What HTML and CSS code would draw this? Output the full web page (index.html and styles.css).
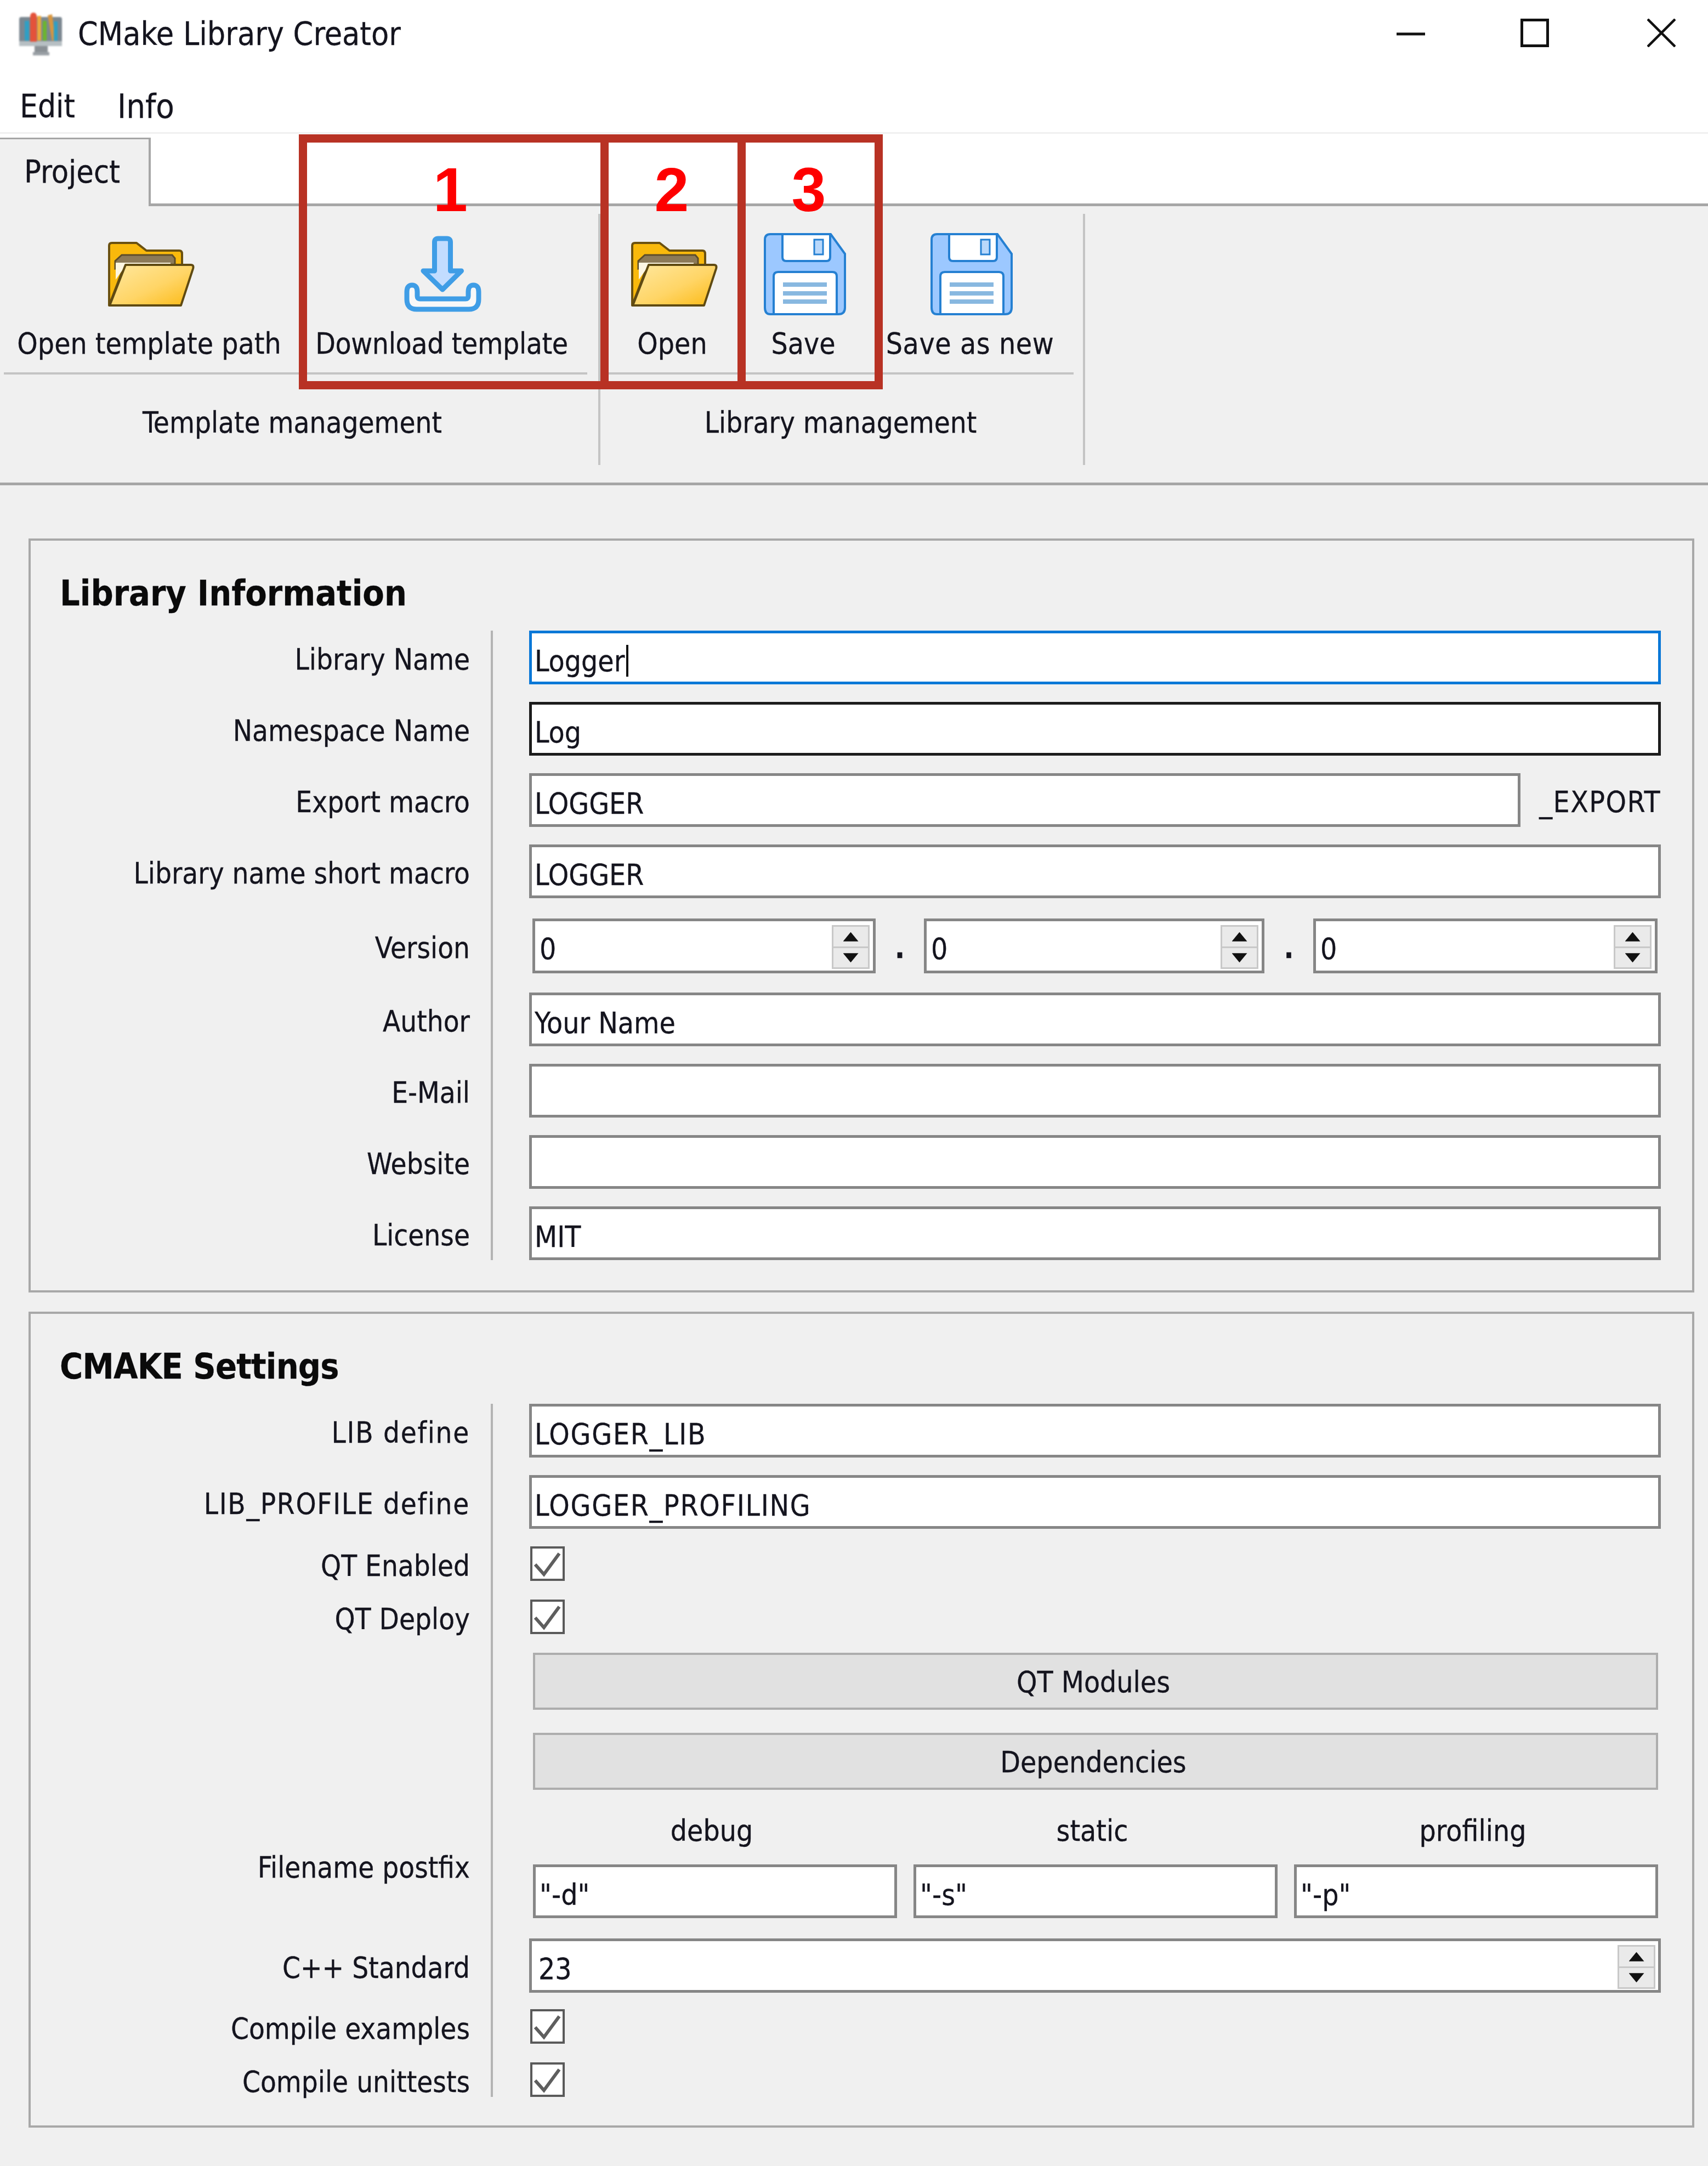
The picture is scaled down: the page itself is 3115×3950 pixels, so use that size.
FILE: index.html
```html
<!DOCTYPE html>
<html lang="en">
<head>
  <meta charset="UTF-8">
  <title>CMake Library Creator</title>
  <link rel="stylesheet" href="styles.css">
</head>
<body>
<svg class="defs" width="0" height="0">
  <defs>
    <linearGradient id="folderFront" x1="0" y1="0" x2="1" y2="1">
      <stop offset="0" stop-color="#ffe8a0"/>
      <stop offset="0.55" stop-color="#ffd566"/>
      <stop offset="1" stop-color="#fbb913"/>
    </linearGradient>
    <g id="folder">
      <path d="M3 117V8q0-5 5-5h45l18 14h60q5 0 5 6v24H30L3 117z" fill="#f9b90c" stroke="#6b5110" stroke-width="4" stroke-linejoin="round"/>
      <path d="M14 50V36l12-11h92l5 6v14H36z" fill="#8c7a58" stroke="#5d4d2a" stroke-width="3"/>
      <path d="M15 70V39h100v7H32z" fill="#fdf6e2"/>
      <path d="M33 43h119q6 0 4 7l-22 67H4z" fill="url(#folderFront)" stroke="#5f4a12" stroke-width="4" stroke-linejoin="round"/>
    </g>
    <g id="floppy">
      <path d="M12 2h110l26 36v98q0 12-12 12H12q-10 0-10-12V12Q2 2 12 2z" fill="#9cc8ff" stroke="#2580d2" stroke-width="4"/>
      <path d="M34 2h87v42q0 7-7 7H41q-7 0-7-7z" fill="#fff" stroke="#2580d2" stroke-width="4"/>
      <rect x="92" y="12" width="16" height="27" fill="#b9d8fb" stroke="#2580d2" stroke-width="3"/>
      <path d="M18 148V79q0-8 8-8h99q8 0 8 8v69z" fill="#fff" stroke="#2580d2" stroke-width="4"/>
      <rect x="35" y="90" width="80" height="8" fill="#88b8e0"/>
      <rect x="35" y="106" width="80" height="8" fill="#88b8e0"/>
      <rect x="35" y="121" width="80" height="8" fill="#88b8e0"/>
    </g>
    <path id="check" d="M5 29L21 47L49 9" fill="none" stroke="#5e5e5e" stroke-width="6"/>
  </defs>
</svg>

<div class="window">

  <div class="titlebar">
    <svg class="app-icon" viewBox="0 0 80 78">
      <rect x="0" y="8" width="78" height="53" rx="4" fill="#7b8790"/>
      <rect x="0" y="52" width="78" height="9" fill="#b7bfc3"/>
      <rect x="10" y="15" width="8" height="36" fill="#2f9fc4"/>
      <path d="M20 53V8q0-8 6-8t6 8v45z" fill="#e4523a"/>
      <rect x="33" y="6" width="7" height="45" fill="#eda93a"/>
      <rect x="43" y="15" width="7" height="36" fill="#6cb52e"/>
      <path d="M52 5l8-2 6 48h-6z" fill="#d8963f"/>
      <rect x="63" y="16" width="7" height="35" fill="#2f9fc4"/>
      <rect x="28" y="61" width="24" height="13" fill="#8a9095"/>
      <rect x="25" y="72" width="30" height="6" fill="#9aa0a5"/>
    </svg>
    <span class="app-title">CMake Library Creator</span>
    <div class="win-controls">
      <svg class="win-btn" viewBox="0 0 52 52"><path d="M0 28H52" stroke="#111" stroke-width="5"/></svg>
      <svg class="win-btn" viewBox="0 0 52 52"><rect x="2.5" y="2.5" width="47" height="47" fill="none" stroke="#111" stroke-width="5"/></svg>
      <svg class="win-btn" viewBox="0 0 52 52"><path d="M1 1L51 51M51 1L1 51" stroke="#111" stroke-width="4.5"/></svg>
    </div>
  </div>

  <div class="menubar">
    <span class="menu-item">Edit</span>
    <span class="menu-item">Info</span>
  </div>

  <div class="tabstrip">
    <div class="tab">Project</div>
  </div>

  <div class="ribbon">
    <div class="group group-template">
      <div class="tools">
        <div class="tool tool-path">
          <div class="tool-icon"><svg width="160" height="120" viewBox="0 0 160 120"><use href="#folder"/></svg></div>
          <span>Open template path</span>
        </div>
        <div class="tool tool-download">
          <div class="tool-icon">
            <svg width="141" height="140" viewBox="0 0 141 140">
              <path d="M62 5h16q6.500 0 6.500 6.500V64h20L70 98 35 64h20.500V11.500Q55.500 5 62 5z" fill="#c2dcff" stroke="#3f9de6" stroke-width="9" stroke-linejoin="round"/>
              <path d="M5 102q0-12 9.500-12t9.500 12v8q0 5 5 5h83q5 0 5-5v-8q0-12 9.500-12t9.500 12v14q0 18-18 18H23q-18 0-18-18z" fill="#f8f8f8" stroke="#3f9de6" stroke-width="9"/>
            </svg>
          </div>
          <span>Download template</span>
        </div>
      </div>
      <div class="group-label">Template management</div>
    </div>
    <div class="group group-library">
      <div class="tools">
        <div class="tool tool-open">
          <div class="tool-icon"><svg width="160" height="120" viewBox="0 0 160 120"><use href="#folder"/></svg></div>
          <span>Open</span>
        </div>
        <div class="tool tool-save">
          <div class="tool-icon"><svg width="150" height="150" viewBox="0 0 150 150"><use href="#floppy"/></svg></div>
          <span>Save</span>
        </div>
        <div class="tool tool-saveas">
          <div class="tool-icon"><svg width="150" height="150" viewBox="0 0 150 150"><use href="#floppy"/></svg></div>
          <span class="wide">Save as new</span>
        </div>
      </div>
      <div class="group-label">Library management</div>
    </div>
  </div>

  <div class="content">
    <section class="panel">
      <h2>Library Information</h2>
      <div class="row"><div class="lbl">Library Name</div><div class="field"><div class="input focused">Logger<i class="caret"></i></div></div></div>
      <div class="row"><div class="lbl">Namespace Name</div><div class="field"><div class="input active">Log</div></div></div>
      <div class="row"><div class="lbl">Export macro</div><div class="field field-export"><div class="input">LOGGER</div><span class="suffix">_EXPORT</span></div></div>
      <div class="row gap-wide"><div class="lbl">Library name short macro</div><div class="field"><div class="input">LOGGER</div></div></div>
      <div class="row gap-ver"><div class="lbl">Version</div>
        <div class="field">
          <div class="version">
            <div class="input spinbox"><span class="digit">0</span><div class="spin"><b class="up"></b><b class="down"></b></div></div>
            <span class="dot">.</span>
            <div class="input spinbox"><span class="digit">0</span><div class="spin"><b class="up"></b><b class="down"></b></div></div>
            <span class="dot">.</span>
            <div class="input spinbox"><span class="digit">0</span><div class="spin"><b class="up"></b><b class="down"></b></div></div>
          </div>
        </div>
      </div>
      <div class="row"><div class="lbl">Author</div><div class="field"><div class="input">Your Name</div></div></div>
      <div class="row"><div class="lbl">E-Mail</div><div class="field"><div class="input"></div></div></div>
      <div class="row"><div class="lbl">Website</div><div class="field"><div class="input"></div></div></div>
      <div class="row last"><div class="lbl">License</div><div class="field"><div class="input">MIT</div></div></div>
    </section>

    <section class="panel panel-cmake">
      <h2 class="tight">CMAKE Settings</h2>
      <div class="row"><div class="lbl caps">LIB define</div><div class="field"><div class="input caps">LOGGER_LIB</div></div></div>
      <div class="row"><div class="lbl caps">LIB_PROFILE define</div><div class="field"><div class="input caps">LOGGER_PROFILING</div></div></div>
      <div class="row gap-check"><div class="lbl">QT Enabled</div><div class="field"><div class="checkbox"><svg viewBox="0 0 55 55"><use href="#check"/></svg></div></div></div>
      <div class="row gap-check"><div class="lbl">QT Deploy</div><div class="field"><div class="checkbox"><svg viewBox="0 0 55 55"><use href="#check"/></svg></div></div></div>
      <div class="row gap-btn"><div class="lbl"></div><div class="field"><div class="button">QT Modules</div></div></div>
      <div class="row gap-btn"><div class="lbl"></div><div class="field"><div class="button">Dependencies</div></div></div>
      <div class="row gap-post"><div class="lbl">Filename postfix</div>
        <div class="field">
          <div class="postfix">
            <div class="post-col"><span class="post-title">debug</span><div class="input">"-d"</div></div>
            <div class="post-col"><span class="post-title">static</span><div class="input">"-s"</div></div>
            <div class="post-col"><span class="post-title">profiling</span><div class="input">"-p"</div></div>
          </div>
        </div>
      </div>
      <div class="row gap-std"><div class="lbl">C++ Standard</div><div class="field"><div class="input spinbox std">23<div class="spin"><b class="up"></b><b class="down"></b></div></div></div></div>
      <div class="row gap-check"><div class="lbl">Compile examples</div><div class="field"><div class="checkbox"><svg viewBox="0 0 55 55"><use href="#check"/></svg></div></div></div>
      <div class="row last"><div class="lbl">Compile unittests</div><div class="field"><div class="checkbox"><svg viewBox="0 0 55 55"><use href="#check"/></svg></div></div></div>
    </section>
  </div>

  <!-- red callouts drawn on top of the toolbar -->
  <div class="callout callout-1">1</div>
  <div class="callout callout-2">2</div>
  <div class="callout callout-3">3</div>
</div>
</body>
</html>
```

FILE: styles.css
```css
* {
  box-sizing: border-box;
}
body {
  margin: 0;
  background-color: #f0f0f0;
  font-family: "DejaVu Sans", sans-serif;
  font-stretch: condensed;
  font-size: 53px;
  color: #14141e;
  -webkit-text-stroke: 0.3px #14141e;
}
.defs {
  position: absolute;
}
.window {
  position: relative;
  width: 3115px;
  height: 3950px;
}

/* title + menu */
.titlebar {
  display: flex;
  align-items: center;
  height: 120px;
  padding-left: 35px;
  background: #fff;
}
.app-icon {
  width: 80px;
  height: 78px;
  margin-top: 4px;
  filter: blur(1.5px);
}
.app-title {
  margin-left: 27px;
  margin-top: 4px;
  font-size: 58.500px;
}
.win-controls {
  display: flex;
  gap: 174px;
  margin-left: auto;
  margin-right: 59px;
}
.win-btn {
  width: 52px;
  height: 52px;
}
.win-btn:last-child {
  margin-left: 5px;
}
.menubar {
  display: flex;
  gap: 77px;
  height: 124px;
  padding: 0 36px;
  align-items: center;
  background: #fff;
  border-bottom: 3px solid #f0f0f0;
}
.menu-item {
  font-size: 58px;
  margin-top: 26px;
}
.menu-item:last-child {
  font-size: 61px;
}

/* tabs */
.tabstrip {
  height: 132px;
  padding-top: 7px;
  background: #fff;
  border-bottom: 5px solid #a6a6a6;
}
.tab {
  width: 275px;
  height: 125px;
  padding: 26px 0 0 44px;
  font-size: 57px;
  background: #f0f0f0;
  border-top: 3px solid #a6a6a6;
  border-right: 4px solid #a6a6a6;
}

/* ribbon */
.ribbon {
  display: flex;
  height: 509px;
  padding-top: 14px;
  border-bottom: 5px solid #a6a6a6;
}
.group {
  height: 458px;
  border-right: 4px solid #c4c4c4;
}
.group-template {
  width: 1095px;
}
.group-library {
  width: 884px;
  padding-left: 15px;
}
.tools {
  display: flex;
  height: 293px;
  border-bottom: 4px solid #c4c4c4;
}
.group-template .tools {
  margin: 0 20px 0 7px;
}
.group-library .tools {
  margin-right: 17px;
}
.tool {
  display: flex;
  flex-direction: column;
  align-items: center;
  padding-top: 30px;
  white-space: nowrap;
}
.tool-icon {
  display: flex;
  align-items: center;
  justify-content: center;
  height: 160px;
  margin-bottom: 16px;
}
.tool-path .tool-icon,
.tool-download .tool-icon,
.tool-open .tool-icon {
  padding-left: 8px;
}
.tool-save .tool-icon,
.tool-saveas .tool-icon {
  padding-left: 5px;
}
.tool-download span {
  letter-spacing: -0.4px;
  padding-left: 4px;
}
.wide {
  letter-spacing: 0.6px;
}
.tool-path {
  width: 530px;
}
.tool-download {
  width: 533px;
}
.tool-open {
  width: 232px;
}
.tool-save {
  width: 246px;
}
.tool-saveas {
  width: 362px;
}
.group-label {
  padding-top: 57px;
  font-size: 52.500px;
  text-align: center;
}
.group-template .group-label {
  padding-right: 25px;
}
.group-library .group-label {
  padding-right: 19px;
}

/* form panels */
.content {
  padding: 97px 25px 0 52px;
}
.panel {
  height: 1375px;
  padding-top: 59px;
  background: #f0f0f0;
  border: 4px solid #a8a8a8;
}
.panel-cmake {
  height: 1488px;
  margin-top: 35px;
}
.panel h2 {
  height: 70px;
  margin: 0 0 35px 53px;
  font-size: 64px;
  line-height: 74px;
  font-weight: bold;
  color: #0a0a0a;
}
.panel h2.tight {
  letter-spacing: -0.8px;
}
.row {
  display: flex;
  --gap: 32px;
}
.row.gap-wide {
  --gap: 37px;
}
.row.gap-ver {
  --gap: 35px;
}
.row.gap-check {
  --gap: 34px;
}
.row.gap-btn {
  --gap: 42px;
}
.row.gap-post {
  --gap: 37px;
}
.row.gap-std {
  --gap: 30px;
}
.row.last {
  --gap: 0px;
}
.lbl {
  display: flex;
  align-items: center;
  justify-content: flex-end;
  width: 839px;
  padding-right: 38px;
  padding-bottom: var(--gap);
  padding-top: 8px;
  font-size: 52.500px;
  line-height: 48px;
  white-space: nowrap;
}
.field {
  flex: 1;
  padding: 0 57px var(--gap) 66px;
  border-left: 4px solid #b4b4b4;
}
.input {
  height: 98px;
  padding: 6px 0 0 5px;
  line-height: 90px;
  background: #fff;
  border: 5px solid #868686;
  white-space: nowrap;
}
.caps {
  letter-spacing: 1.7px;
}
.input.focused {
  border-color: #0a78d7;
}
.input.active {
  border-color: #1c1c1c;
}
.caret {
  display: inline-block;
  width: 4px;
  height: 58px;
  margin-left: 3px;
  vertical-align: -10px;
  background: #111;
}
.field-export {
  display: flex;
  align-items: center;
}
.field-export .input {
  flex: 1;
}
.suffix {
  width: 256px;
  padding-top: 6px;
  letter-spacing: 1.5px;
  text-align: right;
}
.version {
  display: grid;
  grid-template-columns: 626px 88px 621px 89px 628px;
  margin-left: 6px;
}
.spinbox {
  display: flex;
  justify-content: space-between;
  height: 100px;
}
.digit {
  padding-left: 3px;
  padding-top: 0;
}
.dot {
  height: 100px;
  text-align: center;
  font-weight: bold;
  line-height: 108px;
}
.spin {
  display: flex;
  flex-direction: column;
  width: 69px;
  height: 80px;
  margin: 1px 6px 0 0;
  background: #eaeaea;
  border: 3px solid #c8c8c8;
}
.spin b {
  flex: 1;
  position: relative;
}
.spin .up {
  border-bottom: 3px solid #c8c8c8;
}
.spin b::after {
  content: "";
  position: absolute;
  left: 50%;
  top: 50%;
  width: 28px;
  height: 17px;
  margin: -8px 0 0 -14px;
  background: #111;
}
.spin .up::after {
  clip-path: polygon(50% 0, 100% 100%, 0 100%);
}
.spin .down::after {
  clip-path: polygon(0 0, 100% 0, 50% 100%);
}
.std {
  height: 99px;
  padding-left: 12px;
}
.std .spin {
  margin-right: 5px;
}
.checkbox {
  width: 63px;
  height: 63px;
  margin-left: 2px;
  background: #fff;
  border: 4px solid #5a5a5a;
}
.checkbox svg {
  display: block;
}
.button {
  height: 104px;
  margin: 0 5px 0 7px;
  padding-right: 8px;
  line-height: 100px;
  text-align: center;
  background: #e1e1e1;
  border: 4px solid #adadad;
}
.postfix {
  display: grid;
  grid-template-columns: 1fr 1fr 1fr;
  gap: 30px;
  margin: 0 5px 0 7px;
}
.post-col {
  display: flex;
  flex-direction: column;
}
.post-title {
  height: 94px;
  padding-right: 12px;
  line-height: 66px;
  text-align: center;
}
.post-col .input {
  padding-left: 7px;
}

/* annotations */
.callout {
  position: absolute;
  top: 245px;
  height: 465px;
  padding-top: 28px;
  padding-right: 5px;
  border: 15px solid #b83224;
  font-family: "Liberation Sans", sans-serif;
  font-stretch: normal;
  font-size: 113px;
  font-weight: bold;
  line-height: 116px;
  text-align: center;
  color: #fe0000;
  -webkit-text-stroke: 0;
}
.callout-1 {
  left: 545px;
  width: 565px;
  padding-right: 12px;
}
.callout-2 {
  left: 1095px;
  width: 265px;
}
.callout-3 {
  left: 1345px;
  width: 265px;
}
```
